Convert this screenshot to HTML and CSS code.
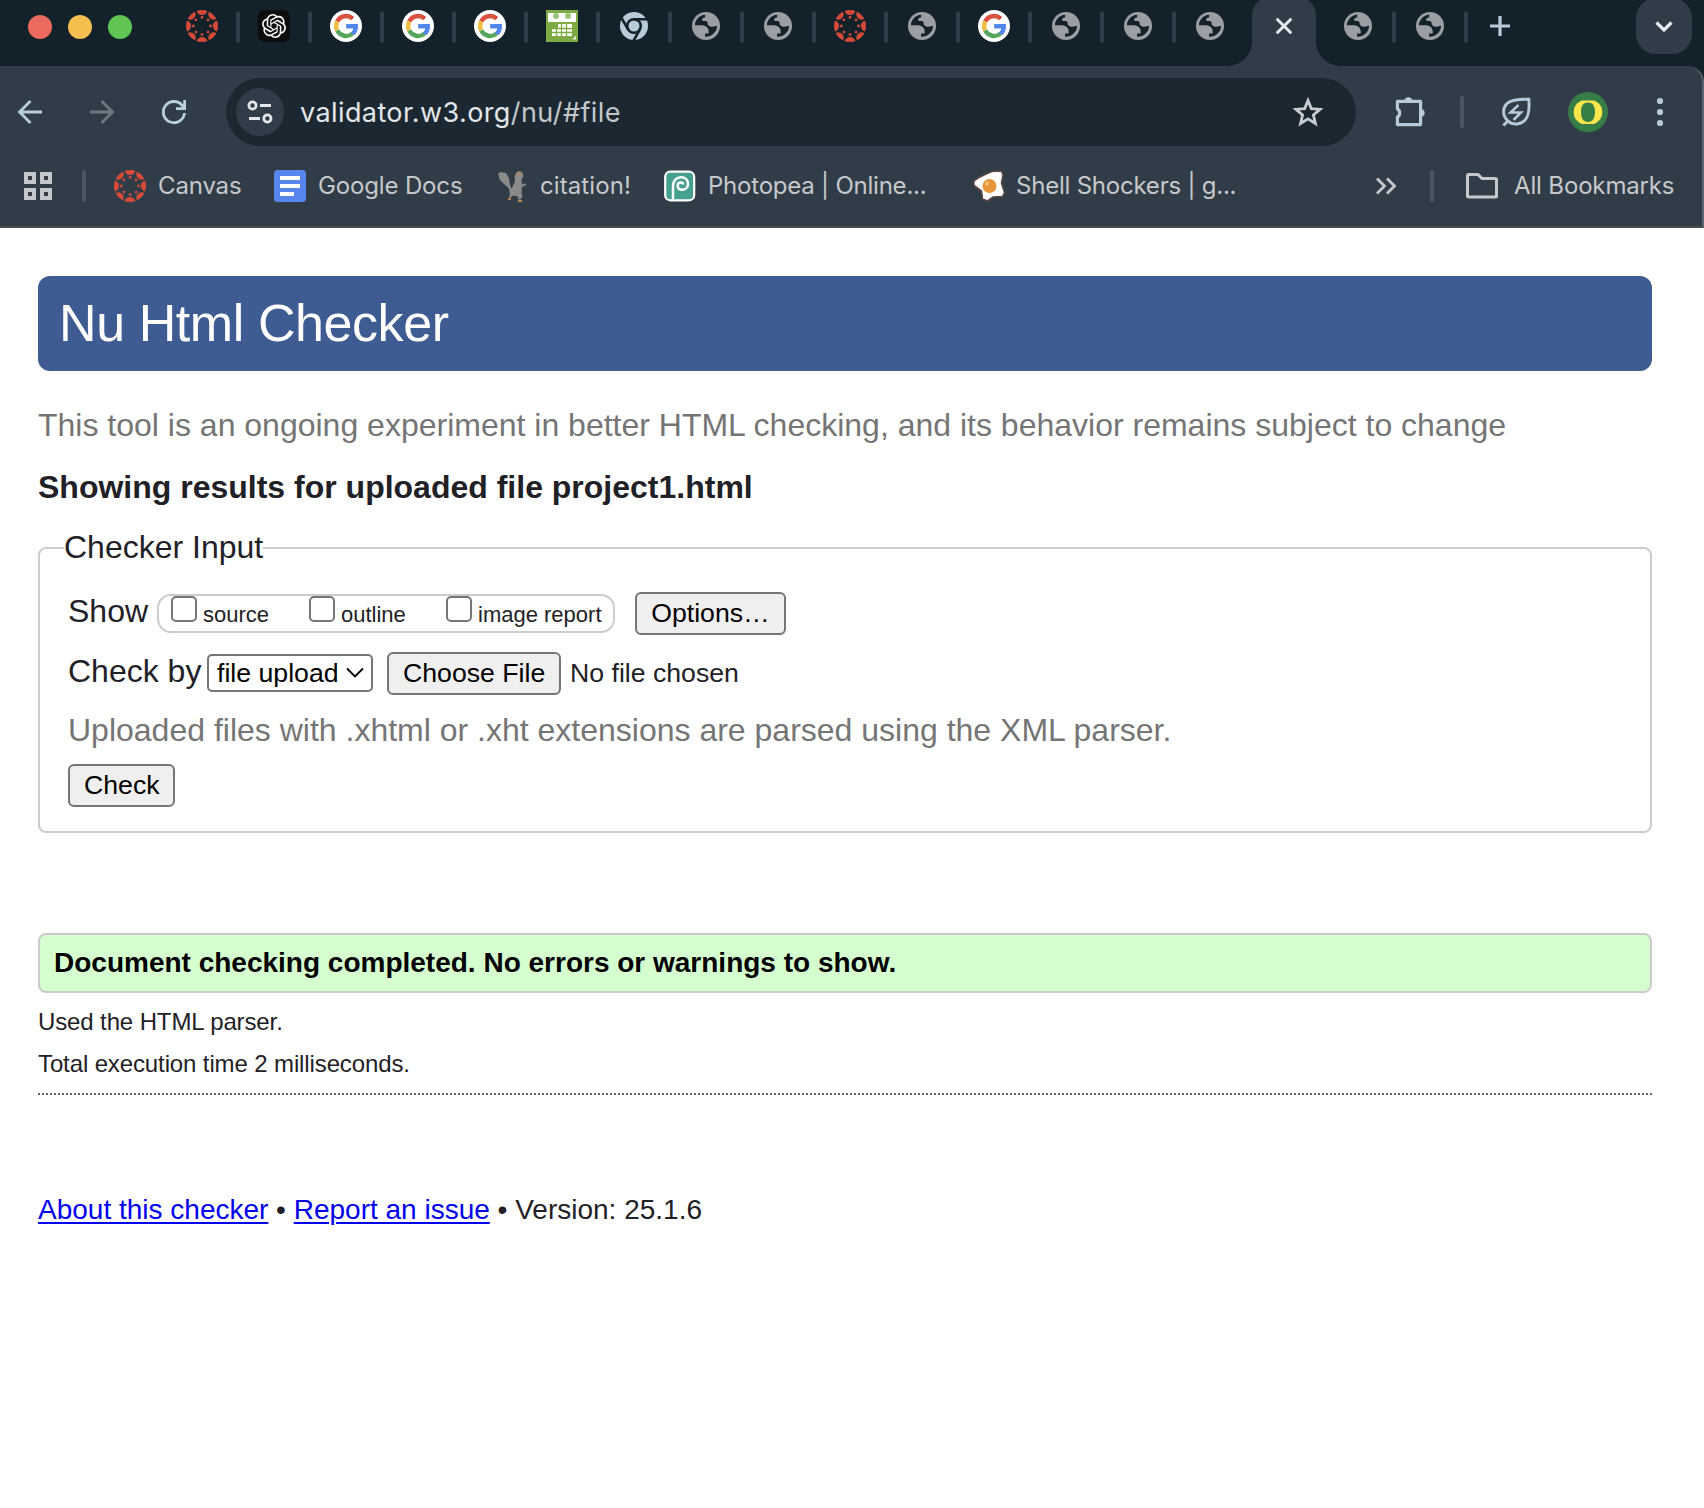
FILE: index.html
```html
<!DOCTYPE html>
<html lang="en">
<head>
<meta charset="utf-8">
<title>Nu Html Checker</title>
<link rel="stylesheet" href="styles.css">
</head>
<body>
<svg class="sprite" aria-hidden="true">
  <defs>
    <clipPath id="disc"><circle cx="16" cy="16" r="16"/></clipPath>
    <symbol id="canvas" viewBox="0 0 32 32">
      <g clip-path="url(#disc)" fill="#d64b38">
        <circle cx="16" cy="-.5" r="5.6"/><circle cx="16" cy="32.500" r="5.600"/><circle cx="-.5" cy="16" r="5.600"/><circle cx="32.500" cy="16" r="5.600"/>
        <circle cx="4.300" cy="4.300" r="5.400"/><circle cx="27.700" cy="4.300" r="5.400"/><circle cx="4.300" cy="27.700" r="5.400"/><circle cx="27.700" cy="27.700" r="5.400"/>
        <circle cx="16" cy="7.400" r="1.400"/><circle cx="16" cy="24.600" r="1.400"/><circle cx="7.400" cy="16" r="1.400"/><circle cx="24.600" cy="16" r="1.400"/>
        <circle cx="9.900" cy="9.900" r="1.400"/><circle cx="22.100" cy="9.900" r="1.400"/><circle cx="9.900" cy="22.100" r="1.400"/><circle cx="22.100" cy="22.100" r="1.400"/>
      </g>
    </symbol>
    <symbol id="gpt" viewBox="0 0 32 32">
      <rect width="32" height="32" rx="7" fill="#0c0d0e"/>
      <path transform="translate(4 4)" fill="#fff" d="M22.2819 9.8211a5.9847 5.9847 0 0 0-.5157-4.9108 6.0462 6.0462 0 0 0-6.5098-2.9A6.0651 6.0651 0 0 0 4.9807 4.1818a5.9847 5.9847 0 0 0-3.9977 2.9 6.0462 6.0462 0 0 0 .7427 7.0966 5.98 5.98 0 0 0 .511 4.9107 6.051 6.051 0 0 0 6.5146 2.9001A5.9847 5.9847 0 0 0 13.2599 24a6.0557 6.0557 0 0 0 5.7718-4.2058 5.9894 5.9894 0 0 0 3.9977-2.9001 6.0557 6.0557 0 0 0-.7475-7.0729zm-9.022 12.6081a4.4755 4.4755 0 0 1-2.8764-1.0408l.1419-.0804 4.7783-2.7582a.7948.7948 0 0 0 .3927-.6813v-6.7369l2.02 1.1686a.071.071 0 0 1 .038.052v5.5826a4.504 4.504 0 0 1-4.4945 4.4944zm-9.6607-4.1254a4.4708 4.4708 0 0 1-.5346-3.0137l.142.0852 4.783 2.7582a.7712.7712 0 0 0 .7806 0l5.8428-3.3685v2.3324a.0804.0804 0 0 1-.0332.0615L9.74 19.9502a4.4992 4.4992 0 0 1-6.1408-1.6464zM2.3408 7.8956a4.485 4.485 0 0 1 2.3655-1.9728V11.6a.7664.7664 0 0 0 .3879.6765l5.8144 3.3543-2.0201 1.1685a.0757.0757 0 0 1-.071 0l-4.8303-2.7865A4.504 4.504 0 0 1 2.3408 7.872zm16.5963 3.8558L13.1038 8.364 15.1192 7.2a.0757.0757 0 0 1 .071 0l4.8303 2.7913a4.4944 4.4944 0 0 1-.6765 8.1042v-5.6772a.79.79 0 0 0-.407-.667zm2.0107-3.0231l-.142-.0852-4.7735-2.7818a.7759.7759 0 0 0-.7854 0L9.409 9.2297V6.8974a.0662.0662 0 0 1 .0284-.0615l4.8303-2.7866a4.4992 4.4992 0 0 1 6.6802 4.66zM8.3065 12.863l-2.02-1.1638a.0804.0804 0 0 1-.038-.0567V6.0742a4.4992 4.4992 0 0 1 7.3757-3.4537l-.142.0805L8.704 5.459a.7948.7948 0 0 0-.3927.6813zm1.0976-2.3654l2.602-1.4998 2.6069 1.4998v2.9994l-2.5974 1.4997-2.6067-1.4997Z"/>
    </symbol>
    <symbol id="google" viewBox="0 0 32 32">
      <circle cx="16" cy="16" r="16" fill="#fff"/>
      <g fill="none" stroke-width="4.400">
        <path d="M7.200 11.400A10 10 0 0 1 22.800 8.700" stroke="#d9503f"/>
        <path d="M7.200 20.600A10 10 0 0 1 7.200 11.400" stroke="#f2bd42"/>
        <path d="M22.500 23.600A10 10 0 0 1 7.200 20.600" stroke="#58a55c"/>
      </g>
      <path d="M16.200 13.900h11.600c.8 4.600-.6 8.800-3.700 11.300l-3.500-2.800c1.400-1 2.300-2.300 2.700-4h-7.100z" fill="#5086ec"/>
    </symbol>
    <symbol id="calendar" viewBox="0 0 32 32">
      <path fill="#7dab44" d="M0 0h32v32H0z"/>
      <path fill="#fff" d="M2 3h28v9H2z"/>
      <circle cx="10" cy="6" r="3" fill="#9cc47a"/><circle cx="22" cy="6" r="3" fill="#9cc47a"/>
      <path fill="#fff" d="M12 14h14v12H6v-8h6z"/>
      <path d="M10.500 14v12M15.500 14v12M20.500 14v12M6 18.500h20M6 22.500h20" stroke="#7dab44" stroke-width="1.300"/>
      <path d="M2 29.500h24l4-4v4z" fill="#dcebcf"/>
    </symbol>
    <symbol id="chrome" viewBox="0 0 32 32">
      <circle cx="16" cy="16" r="14" fill="#b8c9d7"/>
      <g fill="none" stroke="#12212a" stroke-width="2.600"><circle cx="16" cy="16" r="6.800"/><path d="M16 9.200h14M10.100 19.400 3.500 8M21.900 19.400 15.600 30.600"/></g>
      <circle cx="16" cy="16" r="4.400" fill="#b8c9d7"/>
    </symbol>
    <symbol id="globe" viewBox="0 0 32 32">
      <circle cx="16" cy="16" r="14" fill="#9b9fa3"/>
      <path fill="#12212a" d="M4.900 15.200C5 10 9.500 5.200 15.200 4.800v2.400c-2.200.3-3.200 1.600-3.100 3.300.9.500 3.700.2 4.900 1 .9.700.4 2.900 1.300 3.700 1 .9 2.200 1.700 4.500 1.500 1.600-.1 2.800-.9 4.300-.9-.2 5.900-5 11.200-12 10.900v-3.300h3.600v-1.600c0-3.900-2.300-6.200-6.300-6.600z"/>
    </symbol>
  </defs>
</svg>

<header class="browser">
  <div class="tabstrip">
    <div class="lights"><i class="light red"></i><i class="light amber"></i><i class="light green"></i></div>
    <div class="tab"><svg><use href="#canvas"/></svg></div>
    <div class="tab"><svg><use href="#gpt"/></svg></div>
    <div class="tab"><svg><use href="#google"/></svg></div>
    <div class="tab"><svg><use href="#google"/></svg></div>
    <div class="tab"><svg><use href="#google"/></svg></div>
    <div class="tab"><svg><use href="#calendar"/></svg></div>
    <div class="tab"><svg><use href="#chrome"/></svg></div>
    <div class="tab"><svg><use href="#globe"/></svg></div>
    <div class="tab"><svg><use href="#globe"/></svg></div>
    <div class="tab"><svg><use href="#canvas"/></svg></div>
    <div class="tab"><svg><use href="#globe"/></svg></div>
    <div class="tab"><svg><use href="#google"/></svg></div>
    <div class="tab"><svg><use href="#globe"/></svg></div>
    <div class="tab"><svg><use href="#globe"/></svg></div>
    <div class="tab last"><svg><use href="#globe"/></svg></div>
    <div class="tab-active"><svg viewBox="0 0 32 32"><path d="m8.700 8.700 14.600 14.600M23.300 8.700 8.700 23.300" stroke="#e6e9ed" stroke-width="3" fill="none"/></svg></div>
    <div class="tab"><svg><use href="#globe"/></svg></div>
    <div class="tab"><svg><use href="#globe"/></svg></div>
    <svg class="new-tab" viewBox="0 0 32 32"><path d="M6 16h20M16 6v20" stroke="#b8c9d7" stroke-width="3.200"/></svg>
    <div class="tab-search"><svg viewBox="0 0 32 32"><path d="m8.500 12.500 7.500 7.500 7.500-7.500" stroke="#e6e9ed" stroke-width="3.200" fill="none"/></svg></div>
  </div>

  <div class="chrome-body">
    <div class="toolbar">
      <svg class="nav" viewBox="0 0 32 32"><path d="M28 16H6M16.500 5 5.500 16l11 11" fill="none" stroke="#b8cfdc" stroke-width="2.800"/></svg>
      <svg class="nav" viewBox="0 0 32 32"><path d="M4 16h22M15.500 5l11 11-11 11" fill="none" stroke="#6f7a80" stroke-width="2.800"/></svg>
      <svg class="nav" viewBox="0 0 32 32"><path d="M26.500 17A10.600 10.600 0 1 1 24 9.200l1.500 2.600M26.600 4v8.600H18" fill="none" stroke="#b8cfdc" stroke-width="2.800"/></svg>
      <div class="omnibox">
        <span class="site-info"><svg viewBox="0 0 32 32"><g fill="none" stroke="#e3e6ea" stroke-width="2.800"><circle cx="8.500" cy="9.500" r="3.600"/><path d="M16 9.500h11M5 22.500h11"/><circle cx="23.400" cy="22.500" r="3.600"/></g></svg></span>
        <span class="url">validator.w3.org<span class="path">/nu/#file</span></span>
        <svg class="star" viewBox="0 0 32 32"><path d="m16 4.500 3.300 8.100 8.800.7-6.700 5.700 2 8.500-7.400-4.600-7.400 4.600 2-8.500-6.700-5.700 8.800-.7z" fill="none" stroke="#c9ccd0" stroke-width="2.800"/></svg>
      </div>
      <svg class="puzzle" viewBox="0 0 32 32"><path d="M3.400 5.400h23.200v23.200H3.400v-7.400a5 5 0 0 0 0-8.400z" fill="none" stroke="#b8c9d7" stroke-width="3.200" stroke-linejoin="round"/><path d="M10.400 4.500a4.200 4.500 0 0 1 8 0zM27.500 12.900a4.500 4.200 0 0 1 0 8z" fill="#b8c9d7"/></svg>
      <i class="rule"></i>
      <svg class="leaf" viewBox="0 0 32 32"><path d="M28.800 3.200c.8 9 .2 16.300-3.600 20.700-3.600 4.200-11.700 6.300-17.400 1C2 19.400 2.600 12 7 7.500c3.700-3.600 11.500-4.500 21.800-4.300zM8 25l-4.700 4.500" fill="none" stroke="#b8c9d7" stroke-width="2.900"/><path d="m18.500 9-8 7.500h10.500L13.500 24" fill="none" stroke="#b8c9d7" stroke-width="2.500"/></svg>
      <svg class="avatar" viewBox="0 0 40 40"><circle cx="20" cy="20" r="20" fill="#377e46"/><path fill="#f8e64b" fill-rule="evenodd" d="M14 8.500h12c4.500 2 8.300 5 8.300 11.500s-3.800 10-8.300 12H14c-4.500-2-8.300-5.500-8.300-12S9.500 10.500 14 8.500zm6 1.900c-4.500 0-7 3-7 9.600s2.500 9.900 7 9.900 7-3.300 7-9.900-2.500-9.600-7-9.600z"/></svg>
      <svg class="menu" viewBox="0 0 32 32"><g fill="#b8c9d7"><circle cx="16" cy="5" r="3.100"/><circle cx="16" cy="16" r="3.100"/><circle cx="16" cy="27" r="3.100"/></g></svg>
    </div>

    <div class="bookmarks">
      <svg class="apps" viewBox="0 0 28 28"><path d="M2 2h8v8H2zM18 2h8v8h-8zM2 18h8v8H2zM18 18h8v8h-8z" fill="none" stroke="#c6c8cb" stroke-width="4"/></svg>
      <i class="rule"></i>
      <span class="bookmark b-canvas"><svg><use href="#canvas"/></svg>Canvas</span>
      <span class="bookmark b-docs"><svg viewBox="0 0 32 32"><rect width="32" height="32" rx="3.500" fill="#5686ee"/><path d="M6 8h20M6 16h20M6 24h14" stroke="#fff" stroke-width="4"/></svg>Google Docs</span>
      <span class="bookmark b-citation"><svg viewBox="0 0 32 32"><path fill="#8b8a89" d="M2 3.500 5 2l5 1 3 5 1 7 1.500 3.500 3-5.500.5-4L18.500 7 20 3l3-2 3 1 1.500 4-2 3.500.5 5 4-1v1.500l-4 2-.5 6 1 3.500-2 3h-2l-.5-3-5-1-2 2h-2l1-3.500-1-5.500L8 14 4 10z"/><path fill="#b8814d" d="M20 2.500h5V5l-3-1zM12 28h3v2h-3zM22 30h4v2h-4z"/></svg>citation!</span>
      <span class="bookmark b-photopea"><svg viewBox="0 0 32 32"><rect x="1.200" y="1.700" width="29" height="28.600" rx="5" fill="#46a08f" stroke="#fff" stroke-width="2.200"/><path d="M9 29V16c0-5.500 3.500-8.800 8-8.800 4.200 0 7 2.800 7 6.500s-2.600 6-5.800 6c-2.800 0-4.500-1.700-4.500-4 0-2 1.400-3.300 3.100-3.300 1.500 0 2.300.9 2.300 2" fill="none" stroke="#fff" stroke-width="2.500"/></svg>Photopea | Online...</span>
      <span class="bookmark b-shell"><svg viewBox="0 0 32 32"><path d="M12 4.500 19 1.500 28.500 1l1.500 4-1.500 8 3 9.500-2 4-9.500.5-5.500 4-5-2-1-8L1 15.500.8 11 5 8z" fill="#fff" stroke="#5b4745" stroke-width="1.600"/><circle cx="16.500" cy="16" r="7" fill="#e8953a"/><circle cx="14" cy="13.500" r="2" fill="#f6bd6e"/></svg>Shell Shockers | g...</span>
      <svg class="more" viewBox="0 0 32 32"><path d="m7 8.500 7.500 7.500L7 23.500M17 8.500l7.500 7.500-7.500 7.500" fill="none" stroke="#c6c8cb" stroke-width="2.800"/></svg>
      <i class="rule"></i>
      <span class="bookmark b-all"><svg viewBox="0 0 32 32"><path d="M1.500 8V26a1 1 0 0 0 1 1h27a1 1 0 0 0 1-1V9.500a1 1 0 0 0-1-1H16l-4-4H2.500a1 1 0 0 0-1 1z" fill="none" stroke="#c6c8cb" stroke-width="3"/></svg>All Bookmarks</span>
    </div>
  </div>
</header>

<main class="page">
  <h1 class="banner">Nu Html Checker</h1>
  <p class="tagline">This tool is an ongoing experiment in better HTML checking, and its behavior remains subject to change</p>
  <h2 class="results">Showing results for uploaded file project1.html</h2>

  <fieldset class="input">
    <legend>Checker Input</legend>
    <div class="row">
      <span class="label show">Show</span>
      <div class="options">
        <label><input type="checkbox"><span>source</span></label>
        <label><input type="checkbox"><span>outline</span></label>
        <label><input type="checkbox"><span>image report</span></label>
      </div>
      <button type="button" class="btn more-options">Options…</button>
    </div>
    <div class="row second">
      <span class="label by">Check by</span>
      <div class="select">file upload<svg viewBox="0 0 18 12"><path d="m1 1.500 8 8 8-8" fill="none" stroke="#000" stroke-width="1.800"/></svg></div>
      <button type="button" class="btn choose">Choose File</button>
      <span class="chosen">No file chosen</span>
    </div>
    <p class="hint">Uploaded files with .xhtml or .xht extensions are parsed using the XML parser.</p>
    <button type="button" class="btn check">Check</button>
  </fieldset>

  <p class="success">Document checking completed. No errors or warnings to show.</p>
  <p class="detail">Used the HTML parser.</p>
  <p class="detail time">Total execution time 2 milliseconds.</p>
  <footer class="footer"><a href="#about">About this checker</a> • <a href="#report">Report an issue</a> • Version: 25.1.6</footer>
</main>
</body>
</html>
```
FILE: styles.css
```css
* { box-sizing: border-box; }

body {
  margin: 0;
  min-height: 1508px;
  background: #fff;
  color: #1f2126;
  font-family: "Liberation Sans", Arial, sans-serif;
}

.sprite { position: absolute; width: 0; height: 0; }
svg { display: block; flex: none; width: 32px; height: 32px; }

/* Browser window */
.browser { background: #12212a; height: 228px; }

.tabstrip {
  display: flex;
  height: 66px;
  padding-right: 12px;
}

.lights { display: flex; gap: 16px; width: 168px; padding: 15px 0 0 28px; }
.light { width: 24px; height: 24px; border-radius: 50%; }
.red { background: #ec6a5e; }
.amber { background: #f4bf4f; }
.green { background: #61c554; }

.tab {
  display: flex;
  width: 72px;
  height: 32px;
  margin-top: 10px;
  padding-left: 18px;
}
.tab::after {
  content: "";
  width: 4px;
  height: 32px;
  margin: 1px 0 0 18px;
  border-radius: 2px;
  background: #303d48;
}
.tab.last::after { background: none; }

.tab-active {
  position: relative;
  width: 64px;
  height: 70px;
  margin: -4px 8px 0 4px;
  padding: 14px 16px;
  border-radius: 20px 20px 0 0;
  background: #303d48;
}
.tab-active::before,
.tab-active::after {
  content: "";
  position: absolute;
  bottom: 0;
  width: 24px;
  height: 24px;
}
.tab-active::before { right: 100%; background: radial-gradient(circle at 0 0, transparent 23.5px, #303d48 24px); }
.tab-active::after { left: 100%; background: radial-gradient(circle at 100% 0, transparent 23.5px, #303d48 24px); }

.new-tab { margin: 10px 0 0 16px; }
.tab-search {
  width: 56px;
  height: 56px;
  margin: -2px 0 0 auto;
  padding: 12px;
  border-radius: 20px;
  background: #303d48;
}

.chrome-body {
  display: flex;
  flex-direction: column;
  height: 162px;
  border-right: 2px solid #59646d;
  border-bottom: 2px solid #474b50;
  border-top-right-radius: 16px;
  background: #303d48;
}

.toolbar { display: flex; align-items: center; height: 68px; margin-top: 12px; padding-left: 14px; }
.nav { margin-right: 40px; }

.omnibox {
  display: flex;
  align-items: center;
  width: 1130px;
  height: 68px;
  margin-left: -4px;
  padding: 0 32px 0 10px;
  border-radius: 34px;
  background: #1b2831;
}
.site-info { width: 48px; height: 48px; padding: 8px; border-radius: 50%; background: #303d48; }
.url { margin: 2px 0 0 16px; color: #e3e6ea; font: 27px/34px Inter, sans-serif; letter-spacing: .4px; }
.path { color: #c3c7cb; }
.star { margin-left: auto; }

.rule { flex: none; width: 4px; height: 32px; border-radius: 2px; background: #495660; }
.puzzle { margin-left: 38px; }
.toolbar .rule { margin: 0 36px 0 34px; }
.avatar { width: 40px; height: 40px; margin: 0 36px 0 36px; }

.bookmarks {
  display: flex;
  align-items: center;
  height: 32px;
  margin-top: 24px;
  padding-left: 24px;
  color: #c6c8cb;
  font: 24px/32px Inter, sans-serif;
  letter-spacing: -.15px;
}
.apps { width: 28px; height: 28px; margin-right: 30px; }
.bookmark { display: flex; gap: 12px; flex: none; white-space: nowrap; }
.b-canvas { width: 160px; margin-left: 28px; }
.b-docs { width: 222px; }
.b-citation { width: 168px; letter-spacing: .1px; }
.b-photopea { width: 309px; letter-spacing: -.22px; }
.b-shell { width: 397px; gap: 11px; letter-spacing: -.22px; }
.more { margin-right: 28px; }
.b-all { gap: 16px; margin-left: 32px; }

/* Checker page */
.page { padding: 48px 52px 0 38px; }

.banner {
  height: 95px;
  margin: 0;
  padding: 18px 21px;
  border-radius: 12px;
  background: #3f5c92;
  color: #fff;
  font-size: 52px;
  font-weight: 400;
  letter-spacing: -.42px;
  line-height: 58px;
}

.tagline, .hint { margin: 0; color: #757575; font-size: 32px; line-height: 36px; }
.tagline { margin-top: 36px; }
.results { margin: 26px 0 24px; font-size: 32px; line-height: 36px; }

.input {
  height: 304px;
  margin: 0;
  padding: 25px 28px 0;
  border: 2px solid #ccc;
  border-radius: 8px;
}
.input legend { margin-left: -4px; padding: 0 0 2px; font-size: 32px; line-height: 36px; }

.row { display: flex; align-items: flex-start; height: 43px; }
.second { margin-top: 17px; }
.label { margin-top: 1px; font-size: 32px; line-height: 36px; }
.show { width: 89px; }
.by { width: 139px; }

.options {
  display: flex;
  align-items: flex-start;
  width: 458px;
  height: 39px;
  margin-top: 2px;
  padding-left: 12px;
  border: 2px solid #ccc;
  border-radius: 14px;
  font-size: 22px;
  line-height: 37px;
}
.options label { display: flex; align-items: flex-start; width: 138px; height: 35px; white-space: nowrap; }
.options label:nth-child(2) { width: 137px; }
.options input {
  appearance: none;
  flex: none;
  width: 26px;
  height: 26px;
  margin: 0 6px 0 0;
  border: 2px solid #767676;
  border-radius: 5px;
  background: #fff;
}

.btn {
  height: 43px;
  padding: 0 14px;
  border: 2px solid #767676;
  border-radius: 6px;
  background: #efefef;
  color: #000;
  font: 26.667px/39px "Liberation Sans", Arial, sans-serif;
  white-space: nowrap;
}
.more-options { width: 151px; margin-left: 20px; }

.select {
  display: flex;
  align-items: center;
  width: 166px;
  height: 38px;
  margin-top: 2px;
  padding: 0 7px 0 8px;
  border: 2px solid #767676;
  border-radius: 5px;
  background: #fff;
  color: #000;
  font-size: 26.667px;
  line-height: 34px;
  white-space: nowrap;
}
.select svg { width: 18px; height: 12px; margin-left: auto; }
.choose { width: 174px; margin-left: 14px; }
.chosen { margin: 6px 0 0 9px; font-size: 26.667px; line-height: 30px; }

.hint { margin-top: 17px; }
.check { display: block; width: 107px; margin-top: 16px; }

.success {
  height: 60px;
  margin: 100px 0 0;
  padding: 0 14px;
  border: 2px solid #ccc;
  border-radius: 8px;
  background: #d5ffcf;
  color: #000;
  font-size: 28px;
  font-weight: 700;
  line-height: 56px;
}
.detail { margin: 15px 0 0; font-size: 24px; line-height: 28px; letter-spacing: -.12px; }
.detail.time { margin-top: 14px; padding-bottom: 15px; border-bottom: 2px dotted #666; }
.footer { margin-top: 99px; font-size: 28px; line-height: 32px; }
.footer a { color: #00e; text-decoration-thickness: 2px; text-underline-offset: 3px; }
```
